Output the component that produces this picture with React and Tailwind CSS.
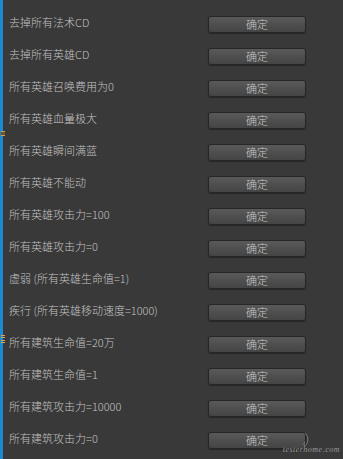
const rows = [
  '去掉所有法术CD',
  '去掉所有英雄CD',
  '所有英雄召唤费用为0',
  '所有英雄血量极大',
  '所有英雄瞬间满蓝',
  '所有英雄不能动',
  '所有英雄攻击力=100',
  '所有英雄攻击力=0',
  '虚弱 (所有英雄生命值=1)',
  '疾行 (所有英雄移动速度=1000)',
  '所有建筑生命值=20万',
  '所有建筑生命值=1',
  '所有建筑攻击力=10000',
  '所有建筑攻击力=0',
];

export default function App() {
  return (
    <div
      className="relative flex h-[459px] w-[343px] overflow-hidden bg-[#393939]"
      style={{ fontFamily: '"Noto Sans CJK SC", "Noto Sans", sans-serif' }}
    >
      {/* left accent bar */}
      <div className="w-[3px] shrink-0 bg-[#1b8ad3]" />

      <div className="flex flex-1 flex-col pt-2">
        {rows.map((label, i) => (
          <div key={i} className="flex h-8 items-center pl-[6px] pr-[37px]">
            <span className="flex-1 pb-[3px] text-[11px] font-light leading-none text-[#c2c2c2]">{label}</span>
            <button className="flex h-[17px] w-[98px] items-center justify-center rounded-[3px] border border-[#262626] bg-gradient-to-b from-[#5a5a5a] to-[#444444] text-[11px] font-light leading-none text-[#c8c8c8] shadow-[0_1px_1px_rgba(0,0,0,0.35)]">
              确定
            </button>
          </div>
        ))}
      </div>

      {/* clipped tab markers on the left edge */}
      <div className="absolute left-[1px] top-[131px] h-[5px] w-[4px] border-y border-[#d8a040] bg-[#6b5430]" />
      <div className="absolute left-[1px] top-[335px] flex h-[8px] w-[4px] flex-col justify-between">
        <div className="h-px bg-[#e0a848]" />
        <div className="h-px bg-[#e0a848]" />
        <div className="h-px bg-[#e0a848]" />
        <div className="h-px bg-[#e0a848]" />
      </div>

      {/* watermark */}
      <span
        className="absolute right-[3px] top-[446px] text-[8px] italic leading-none tracking-[0.5px] text-[#9a9a9a]"
        style={{ fontFamily: '"Liberation Serif", serif' }}
      >
        testerhome.com
      </span>
      <svg className="absolute left-[303px] top-[432px]" width="8" height="16" viewBox="0 0 8 16" fill="none">
        <path d="M2 1 C5 3 6 9 3 13 C1 15 0 12 2 10" stroke="#8a8a8a" strokeWidth="0.8" />
      </svg>
    </div>
  );
}
